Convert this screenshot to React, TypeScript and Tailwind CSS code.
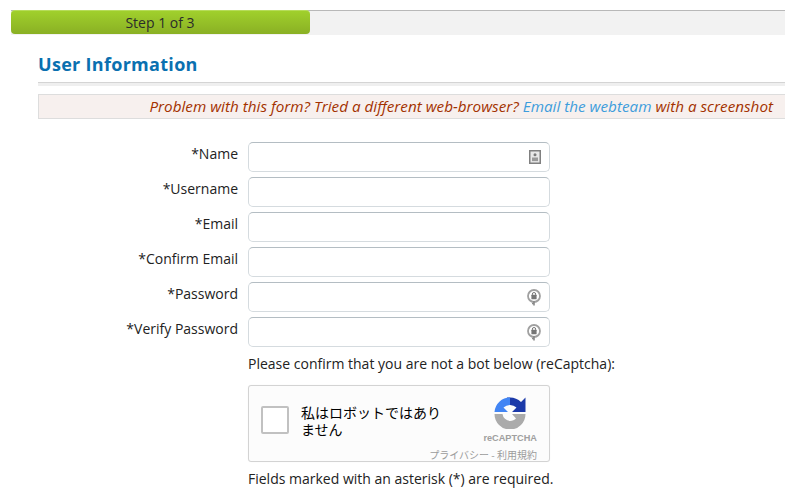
import React from 'react';

const ContactIcon = () => (
  <svg className="w-[12px] h-[14px]" viewBox="0 0 12 14">
    <rect x="0.75" y="0.75" width="10.5" height="12.5" fill="#e8e8e8" stroke="#808080" strokeWidth="1.5" />
    <circle cx="6" cy="4.800" r="1.500" fill="#7a7a7a" />
    <rect x="3" y="7.500" width="6" height="3.600" fill="#9a9a9a" />
  </svg>
);

const KeyIcon = () => (
  <svg className="w-[14px] h-[17px]" viewBox="0 0 14 17">
    <circle cx="7" cy="7" r="6" fill="none" stroke="#a0a0a0" strokeWidth="1.800" />
    <circle cx="7" cy="5.200" r="1.700" fill="none" stroke="#777" strokeWidth="1" />
    <rect x="4.400" y="5.800" width="5.200" height="4.400" rx="0.500" fill="#777" />
    <path d="M7 12v4.500M5 14.500h2" stroke="#8a8a8a" strokeWidth="1.600" />
  </svg>
);

const RecaptchaLogo = () => (
  <svg className="w-[32px] h-[32px]" viewBox="0 0 32 32">
    <path d="M13 0.500H16A15.500 15.500 0 0 1 27 5L31.500 0.500V15H18L22.500 10.500A9.500 9.500 0 0 0 16 8L13 6Z" fill="#1c3aa9" />
    <path d="M16 0.500V8A9.500 9.500 0 0 0 9.500 10.500L14 15H0.500A15.500 15.500 0 0 1 16 0.500Z" fill="#4285f4" />
    <path d="M0.500 17H8.500A8 8 0 0 0 16 24C18.500 24 20.500 23 22 21.500L18 17H31.500A15.500 15.500 0 0 1 0.500 17Z" fill="#ababab" />
  </svg>
);

const fields = [
  { label: '*Name', icon: <ContactIcon /> },
  { label: '*Username' },
  { label: '*Email' },
  { label: '*Confirm Email' },
  { label: '*Password', icon: <KeyIcon /> },
  { label: '*Verify Password', icon: <KeyIcon /> },
];

export default function App() {
  return (
    <div className="h-[499px] w-[785px] overflow-hidden bg-white pt-[10px] font-['Open_Sans',sans-serif] text-[14px] text-[#222222]">
      {/* Progress */}
      <div className="ml-[11px] h-[25px] border-t border-[#b8b8b8] bg-[#f2f2f2]">
        <div className="-mt-px flex h-[24px] w-[299px] items-center justify-center rounded-[4px] border-t border-[#b6dc5a] bg-gradient-to-b from-[#a0d02c] to-[#8ab024] pr-[1px] leading-none text-[#2b2b2b]">
          Step 1 of 3
        </div>
      </div>

      <div className="ml-[38px]">
        <h2 className="mt-[17px] h-[30px] text-[18px] font-bold leading-[25px] tracking-[0.3px] text-[#0a70b0]">
          User Information
        </h2>
        <div className="h-[4px] border-t border-[#d4d4d4] bg-[#efefef]" />

        <div className="mt-[8px] flex h-[25px] items-center justify-end border-y border-l border-[#dddddd] bg-[#f7f0ee] pr-[12px] text-[15.250px] italic text-[#a33200]">
          <span>
            Problem with this form? Tried a different web-browser?{' '}
            <a className="text-[#3d9ddc]">Email the webteam</a> with a screenshot
          </span>
        </div>

        {/* Form */}
        <div className="mt-[23px] flex flex-col gap-[5px]">
          {fields.map((field) => (
            <div key={field.label} className="flex items-start">
              <label className="w-[200px] pt-[1px] text-right leading-[22px]">{field.label}</label>
              <div className="ml-[10px] flex h-[30px] w-[302px] items-center justify-end rounded-[5px] border border-[#d5dbdf] border-t-[#b4bdc3] pr-[8px]">
                {field.icon}
              </div>
            </div>
          ))}
        </div>

        <div className="ml-[210px]">
          <p className="mt-[7px] leading-[20px]">Please confirm that you are not a bot below (reCaptcha):</p>

          <div className="mt-[11px] flex h-[77px] w-[302px] rounded-[3px] border border-[#d3d3d3] bg-[#fcfcfc] shadow-[0_0_1px_rgba(0,0,0,0.08)]">
            <div className="ml-[12px] mt-[20px] h-[28px] w-[28px] rounded-[2px] border-2 border-[#c1c1c1] bg-white" />
            <div className="ml-[12px] mt-[18px] w-[150px] font-['Noto_Sans_CJK_JP',sans-serif] text-[14px] leading-[17px] text-black">
              私はロボットではありません
            </div>
            <div className="ml-auto flex w-[90px] flex-col items-end pr-[12px]">
              <div className="mr-[11px] mt-[11px] h-[32px]">
                <RecaptchaLogo />
              </div>
              <div className="mt-[3px] font-['Liberation_Sans',sans-serif] text-[9.200px] font-bold leading-[12px] text-[#a0a0a0]">
                reCAPTCHA
              </div>
              <div className="mt-[5px] whitespace-nowrap font-['Noto_Sans_CJK_JP',sans-serif] text-[10px] leading-[12px] text-[#9b9b9b]">
                プライバシー - 利用規約
              </div>
            </div>
          </div>

          <p className="mt-[7px] leading-[20px]">Fields marked with an asterisk (*) are required.</p>
        </div>
      </div>
    </div>
  );
}
